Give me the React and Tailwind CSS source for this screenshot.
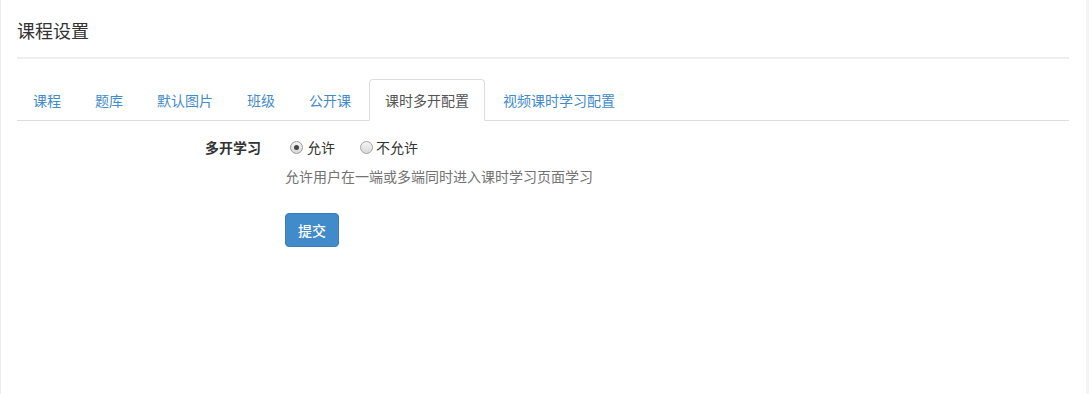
export default function App() {
  const font = { fontFamily: '"Noto Sans CJK SC", "Liberation Sans", sans-serif' };
  const tabs = ["课程", "题库", "默认图片", "班级", "公开课", "课时多开配置", "视频课时学习配置"];
  const active = 5;
  return (
    <div className="w-[1089px] h-[394px] bg-[#f3f3f3] flex" style={font}>
      <div className="w-[1086px] h-full bg-white border-l border-[#ececec] px-4 pt-[17px]">
        <div className="text-[18px] leading-[26px] text-[#333] pb-[14px] border-b-2 border-[#eeeeee] w-[1052px]">课程设置</div>
        <ul className="flex mt-[20px] border-b border-[#dddddd] w-[1052px]">
          {tabs.map((t, i) => (
            <li key={t} className="mr-[2px] -mb-px">
              <span
                className={
                  "block px-[15px] py-[10px] text-[14px] leading-[20px] border rounded-t-[4px] " +
                  (i === active
                    ? "border-[#dddddd] border-b-white bg-white text-[#555]"
                    : "border-transparent text-[#428bca]")
                }
              >
                {t}
              </span>
            </li>
          ))}
        </ul>
        <div className="flex mt-[13px] text-[14px] leading-[20px] text-[#333]">
          <div className="w-[244px] text-right font-bold pt-[3px] shrink-0">多开学习</div>
          <div className="pl-[24px]">
            <div className="flex items-center pt-[3px] h-[23px]">
              <span className="ml-[5px] w-[13px] h-[13px] rounded-full border border-[#9a9a9a] bg-gradient-to-b from-[#f4f4f4] to-[#d8d8d8] flex items-center justify-center">
                <span className="w-[5px] h-[5px] rounded-full bg-[#444]"></span>
              </span>
              <span className="ml-[4px]">允许</span>
              <span className="ml-[25px] w-[13px] h-[13px] rounded-full border border-[#a5a5a5] bg-gradient-to-b from-[#f4f4f4] to-[#d8d8d8]"></span>
              <span className="ml-[3px]">不允许</span>
            </div>
            <div className="mt-[9px] text-[#737373]">允许用户在一端或多端同时进入课时学习页面学习</div>
            <button className="mt-[27px] w-[54px] h-[34px] rounded-[4px] bg-[#428bca] border border-[#3a7dbc] text-white text-[14px] font-medium">
              提交
            </button>
          </div>
        </div>
      </div>
    </div>
  );
}
